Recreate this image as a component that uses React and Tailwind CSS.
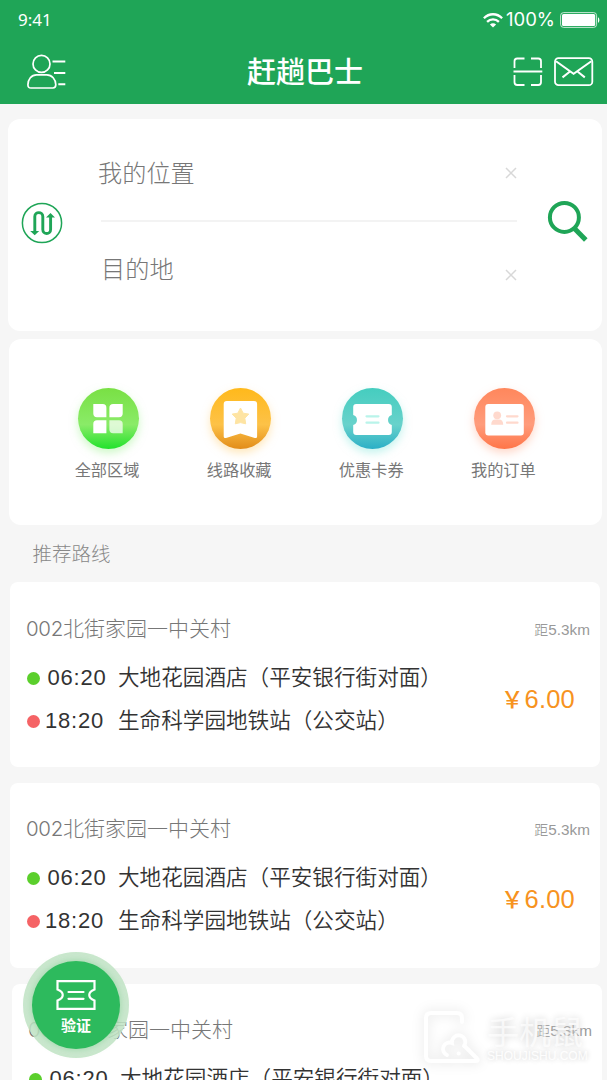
const ROUTE = {
  name: ["002", "北街家园一中关村"],
  distance: "5.3km",
  price: "6.00",
};

function Battery() {
  return (
    <svg width="40" height="16" viewBox="0 0 40 16" fill="none">
      <rect x="0.6" y="0.6" width="36" height="14.8" rx="3" stroke="white" strokeOpacity="0.75" />
      <rect x="2" y="2" width="33.2" height="12" rx="1.5" fill="white" />
      <path d="M38 5.2c1.8.6 1.8 5 0 5.6z" fill="white" />
    </svg>
  );
}

function Wifi() {
  return (
    <svg width="20" height="15" viewBox="0 0 20 15" fill="none" stroke="white" strokeWidth="2.3">
      <path d="M0.9 5.3C6-.1 14-.1 19.1 5.3" />
      <path d="M4.1 8.9c3.3-3.400 8.500-3.400 11.800 0" />
      <path d="M10 14.600 6.900 11.600c1.800-1.700 4.400-1.700 6.200 0z" fill="white" stroke="none" />
    </svg>
  );
}

function Profile() {
  return (
    <svg width="40" height="36" viewBox="0 0 40 36" fill="none" stroke="white" strokeWidth="1.7">
      <circle cx="14.5" cy="9.9" r="8.5" />
      <path d="M9.5 20.8h10.3c5 0 9 4.6 9 10 0 2.200-1 3.200-3 3.200H4c-2.100 0-3.100-1-3.100-3.200 0-5.400 3.600-10 8.600-10z" />
      <path d="M25.500 7.500h12.800M27 19h11.300M31.300 30.300h7" strokeWidth="1.900" />
    </svg>
  );
}

function Scan() {
  return (
    <svg width="30" height="30" viewBox="0 0 30 30" fill="none" stroke="white" strokeWidth="1.8">
      <path d="M1.500 11V4.200q0-2.700 2.700-2.700H11.500M18 1.500h7.300q2.700 0 2.700 2.700V11M28 18v7.300q0 2.700-2.700 2.700H18M11.500 28H4.200q-2.700 0-2.700-2.700V18M0.500 14.500h28.800" />
    </svg>
  );
}

function Mail() {
  return (
    <svg width="40" height="30" viewBox="0 0 40 30" fill="none" stroke="white" strokeWidth="1.800">
      <rect x="1" y="1.200" width="37.300" height="27" rx="3.500" />
      <path d="M2 4.200l17.600 12.600L37.300 4.200M8.500 20.400l7.200-5.600M30.800 20.400l-7-5.600" strokeWidth="2" />
    </svg>
  );
}

function Swap() {
  return (
    <svg width="42" height="42" viewBox="0 0 42 42" fill="none" stroke="#1fa557">
      <circle cx="21" cy="21" r="19.600" strokeWidth="1.500" />
      <path d="M13.800 30V14.500c0-5.200 8-5.200 8 0v13c0 5.400 7.800 5.400 7.800 0V14" strokeWidth="2.900" />
      <path d="M9.200 29h9l-4.500 4.200zM25 15.600h9l-4.500-4.700z" fill="#1fa557" stroke="none" />
    </svg>
  );
}

function Search() {
  return (
    <svg width="42" height="42" viewBox="0 0 42 42" fill="none" stroke="#1fa557">
      <circle cx="17.400" cy="17.400" r="14.500" strokeWidth="4" />
      <path d="M27.500 28.500 38.800 40" strokeWidth="5" />
    </svg>
  );
}

function Clear() {
  return (
    <svg width="12" height="12" viewBox="0 0 12 12" stroke="#d8d8d8" strokeWidth="1.500">
      <path d="M1 1l10 10M11 1 1 11" />
    </svg>
  );
}

function AreaIcon() {
  return (
    <svg width="61" height="61" viewBox="0 0 61 61" fill="white">
      <path d="M15.300 16h9.400q3.700 0 3.700 3.700v9.600H19q-3.700 0-3.700-3.700zM31.400 29.300v-9.600q0-3.700 3.700-3.700h9.600v9.600q0 3.700-3.700 3.700zM15.300 45.300v-9.400q0-3.700 3.700-3.700h9.400v13.100z" />
      <path d="M31.400 32.200H41q3.700 0 3.700 3.700v9.400h-9.600q-3.700 0-3.700-3.700z" opacity="0.720" />
    </svg>
  );
}

function FavoriteIcon() {
  return (
    <svg width="61" height="61" viewBox="0 0 61 61" fill="white">
      <path d="M13.700 16q0-3 3-3h27.400q3 0 3 3v32.500q0 2-2.300 1.500L30.400 45.500 16 50q-2.300.5-2.300-1.500z" />
      <path d="M30.500 20l2.700 5.200 5.600.9-4 4.100.9 5.600-5.200-1.200-5.200 1.200.9-5.600-4-4.100 5.600-.9z" fill="#fee4a3" stroke="#fee4a3" strokeWidth="1" strokeLinejoin="round" />
    </svg>
  );
}

function CouponIcon() {
  return (
    <svg width="61" height="61" viewBox="0 0 61 61" fill="white">
      <path d="M11.200 19q0-3 3-3h32.600q3 0 3 3v8a5.200 5.200 0 0 0 0 10v7q0 3-3 3H14.200q-3 0-3-3v-7a5.200 5.200 0 0 0 0-10z" />
      <path d="M24.500 28.300H36.500M24.500 34.700H36.500" stroke="#b9f4ea" strokeWidth="2.200" strokeLinecap="round" />
    </svg>
  );
}

function OrderIcon() {
  return (
    <svg width="61" height="61" viewBox="0 0 61 61" fill="white">
      <rect x="11.300" y="16" width="38.500" height="31.500" rx="3" />
      <g fill="#ffd9cd">
        <circle cx="23.200" cy="27.300" r="3.900" />
        <path d="M17.200 36.800q0-5.300 4.400-5.300h3.200q4.400 0 4.400 5.300z" />
      </g>
      <path d="M33 28.300H43.500M33 34.700H43.500" stroke="#ffd9cd" strokeWidth="2.200" strokeLinecap="round" />
    </svg>
  );
}

const SHORTCUTS = [
  {
    label: "全部区域",
    Icon: AreaIcon,
    tone: "bg-[linear-gradient(#79e044,#8aeb68_60%,#22e22c)] shadow-[0_4px_8px_#9df38f80]",
  },
  {
    label: "线路收藏",
    Icon: FavoriteIcon,
    tone: "bg-[linear-gradient(#ffb91b,#fdc248_60%,#e28c19)] shadow-[0_4px_8px_#ffd27a80]",
  },
  {
    label: "优惠卡券",
    Icon: CouponIcon,
    tone: "bg-[linear-gradient(#45cdbf,#68d2cb_60%,#2bafc6)] shadow-[0_4px_8px_#8ceadd80]",
  },
  {
    label: "我的订单",
    Icon: OrderIcon,
    tone: "bg-[linear-gradient(#ff875c,#ff9c7c_60%,#ff7548)] shadow-[0_4px_8px_#ffb39880]",
  },
];

function Stop({ dot, time, timeClass, children }) {
  return (
    <div className="flex h-[43px] items-center whitespace-nowrap text-[#333]">
      <span className={`mt-[3px] ml-px size-[13px] shrink-0 rounded-full ${dot}`} />
      <span className={`mt-[2px] mr-[8px] w-[70px] shrink-0 font-['Liberation_Sans'] text-[22px] ${timeClass}`}>{time}</span>
      <span className="mt-[-1px] text-[21.600px] font-[350]">{children}</span>
    </div>
  );
}

function RouteCard({ className = "pt-[29px]" }) {
  return (
    <article className={`flex h-[185px] w-[590px] shrink-0 flex-col rounded-[8px] bg-white pl-[16px] pr-[10px] ${className}`}>
      <div className="flex h-[34px] items-center justify-between whitespace-nowrap">
        <h3 className="text-[21px] font-light text-[#777]">
          <span className="font-[Inter] text-[20.500px] tracking-[-0.300px]">{ROUTE.name[0]}</span>
          {ROUTE.name[1]}
        </h3>
        <span className="mt-[4px] text-[14px] font-light text-[#888]">
          距<span className="font-['Liberation_Sans'] text-[15.300px] text-[#999]">{ROUTE.distance}</span>
        </span>
      </div>
      <div className="mt-[10px] flex items-center justify-between pr-[15px]">
        <div>
          <Stop dot="bg-[#5bcf2c]" time="06:20" timeClass="pl-[7.500px] tracking-[0.800px]">大地花园酒店（平安银行街对面）</Stop>
          <Stop dot="bg-[#f56365]" time="18:20" timeClass="pl-[5px] tracking-[0.800px]">生命科学园地铁站（公交站）</Stop>
        </div>
        <p className="mt-[3px] -ml-[20px] flex items-center whitespace-nowrap text-[#f7931e]">
          <span className="-mt-[3px] mr-[1px] text-[22.500px] leading-none font-medium">￥</span>
          <span className="font-['Liberation_Sans'] text-[25.500px] leading-none tracking-[0.200px]">{ROUTE.price}</span>
        </p>
      </div>
    </article>
  );
}

function Watermark() {
  return (
    <div className="pointer-events-none absolute top-[1003px] left-[412px] flex h-[69px] w-[183px] items-center">
      <svg width="80" height="69" viewBox="0 0 80 69" fill="none" className="shrink-0 overflow-visible drop-shadow-[0_0_6px_#dddddd]">
        <path d="M50 19v-4q0-5-5-5H19q-5 0-5 5v38q0 5 5 5h45q3 0 1-2.500L52.500 43" stroke="white" strokeWidth="4" strokeLinecap="round" strokeLinejoin="round" />
        <path d="M35 52a6.500 6.500 0 1 1 5-12a6.700 6.700 0 1 1 12 3" stroke="white" strokeWidth="3.800" strokeLinecap="round" />
        <circle cx="46.700" cy="50.500" r="2" fill="white" />
      </svg>
      <div className="-ml-[5px] flex flex-col whitespace-nowrap text-white/70 [text-shadow:0_0_7px_#d0d0d0]">
        <span className="text-[32px] leading-[36px]">手机鼠</span>
        <span className="mt-[2px] font-['Liberation_Sans'] text-[12px] leading-[13px] text-white/90 [text-shadow:0_0_5px_#c4c4c4]">SHOUJISHU.COM</span>
      </div>
    </div>
  );
}

export default function App() {
  return (
    <div className="relative flex h-[1080px] w-[607px] flex-col overflow-hidden bg-[#f6f6f6] font-['Noto_Sans_CJK_SC',sans-serif]">
      <header className="flex h-[104px] shrink-0 flex-col bg-[#1fa557] text-white">
        <div className="flex h-[40px] items-center justify-between pr-[7px] pl-[18px]">
          <span className="font-['Noto_Sans'] text-[17px]">9:41</span>
          <div className="flex items-center">
            <Wifi />
            <span className="mr-[5px] ml-[3px] font-[Inter] text-[18.500px]">100%</span>
            <Battery />
          </div>
        </div>
        <div className="grid h-[64px] grid-cols-[220px_auto_1fr] items-center pr-[13px] pl-[27px]">
          <Profile />
          <h1 className="-mt-[3px] text-[29px] leading-none font-medium">赶趟巴士</h1>
          <div className="flex items-center justify-end gap-[11px]">
            <Scan />
            <Mail />
          </div>
        </div>
      </header>

      <section className="mt-[15px] ml-[8px] flex h-[212px] w-[594px] shrink-0 rounded-[12px] bg-white">
        <button className="mt-[83px] ml-[13px] size-[42px]"><Swap /></button>
        <div className="ml-[35px] flex w-[419px] flex-col pt-[30px]">
          <div className="flex h-[48px] items-center justify-between text-[24.200px] font-light text-[#777]">
            <span className="-mt-[2px]">我的位置</span>
            <Clear />
          </div>
          <div className="mt-[23px] ml-[3px] h-[2px] bg-[#f3f3f3]" />
          <div className="mt-[23px] flex h-[48px] items-center justify-between pl-[3px] text-[24.200px] font-light text-[#777]">
            <span className="-mt-[2px]">目的地</span>
            <span className="mt-[12px]"><Clear /></span>
          </div>
        </div>
        <button className="mt-[81px] ml-[30px] size-[42px]"><Search /></button>
      </section>

      <section className="mt-[8px] ml-[9px] flex h-[186px] w-[593px] shrink-0 rounded-[12px] bg-white pt-[48.500px] pl-[33px]">
        {SHORTCUTS.map(({ label, Icon, tone }) => (
          <div key={label} className="flex w-[132.100px] flex-col items-center">
            <div className={`size-[61px] rounded-full ${tone}`}><Icon /></div>
            <span className="mt-[8.500px] mr-[2px] text-[16.200px] leading-[24px] text-[#777]">{label}</span>
          </div>
        ))}
      </section>

      <h2 className="flex h-[57px] shrink-0 items-center pb-[2px] pl-[32.500px] text-[19.500px] font-light text-[#888]">推荐路线</h2>

      <main className="flex flex-col gap-[16px] pl-[10px]">
        <RouteCard />
        <RouteCard className="pt-[28px]" />
        <RouteCard className="ml-[2px] pt-[28px]" />
      </main>

      <button className="absolute top-[952px] left-[23px] flex size-[106px] items-center justify-center rounded-full bg-[#c9e8cdd9] shadow-[inset_0_0_8px_#9bd3a340]">
        <span className="flex size-[88px] flex-col items-center rounded-full bg-[#2dba5d] pt-[19px] text-white shadow-[0_0_8px_#55b96d80]">
          <svg width="40" height="30" viewBox="0 0 40 30" fill="none" stroke="white" strokeWidth="2.200">
            <path d="M1.500 1.200h37v8.300c-7 2.600-7 8.400 0 11v8.300h-37v-8.300c7-2.600 7-8.400 0-11z" />
            <path d="M12.500 12h15M12.500 18.800h15" strokeLinecap="round" />
          </svg>
          <span className="mt-[5px] text-[15px] leading-[20px] font-bold">验证</span>
        </span>
      </button>

      <Watermark />
    </div>
  );
}
